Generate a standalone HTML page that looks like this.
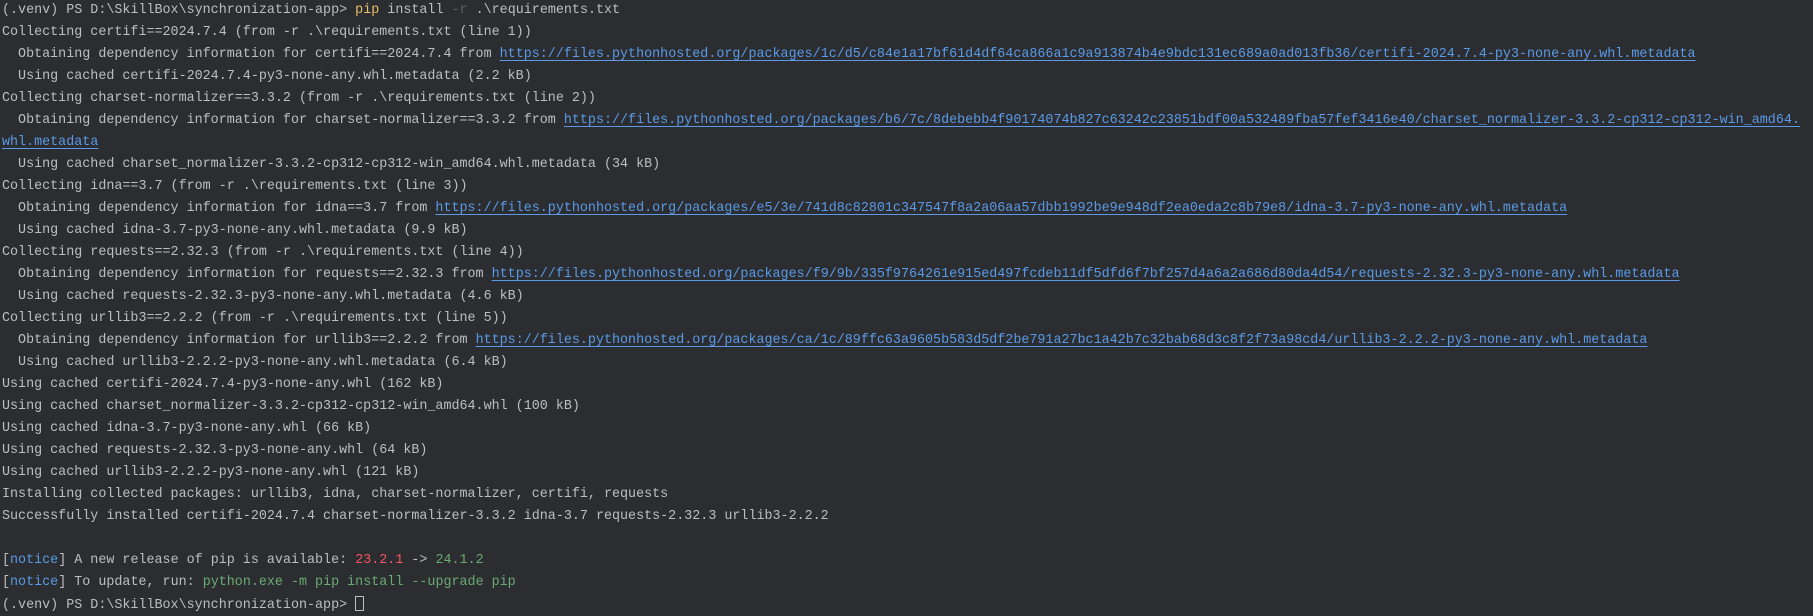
<!DOCTYPE html>
<html><head><meta charset="utf-8"><style>
html,body{margin:0;padding:0;width:1813px;height:600px;overflow:hidden;background:#2b2d30;}
#t{position:absolute;left:2px;top:0px;width:2400px;
font-family:"Liberation Mono",monospace;font-size:13.38px;line-height:22px;color:#bcbec4;white-space:pre;}
.l{color:#5a9ae6;text-decoration:underline;text-underline-offset:3px;}
.d{color:#5f6168}.y{color:#e8bf6a}.b{color:#5a9ae6}.r{color:#f75464}.g{color:#6aab73}
.c{display:inline-block;width:9px;height:15px;border:1px solid #bcbec4;box-sizing:border-box;vertical-align:-3px}
.last{position:relative;top:1px}
</style></head><body><div id="t">(.venv) PS D:\SkillBox\synchronization-app&gt; <span class="y">pip</span> install <span class="d">-r</span> .\requirements.txt
Collecting certifi==2024.7.4 (from -r .\requirements.txt (line 1))
  Obtaining dependency information for certifi==2024.7.4 from <span class="l">https://files.pythonhosted.org/packages/1c/d5/c84e1a17bf61d4df64ca866a1c9a913874b4e9bdc131ec689a0ad013fb36/certifi-2024.7.4-py3-none-any.whl.metadata</span>
  Using cached certifi-2024.7.4-py3-none-any.whl.metadata (2.2 kB)
Collecting charset-normalizer==3.3.2 (from -r .\requirements.txt (line 2))
  Obtaining dependency information for charset-normalizer==3.3.2 from <span class="l">https://files.pythonhosted.org/packages/b6/7c/8debebb4f90174074b827c63242c23851bdf00a532489fba57fef3416e40/charset_normalizer-3.3.2-cp312-cp312-win_amd64.</span>
<span class="l">whl.metadata</span>
  Using cached charset_normalizer-3.3.2-cp312-cp312-win_amd64.whl.metadata (34 kB)
Collecting idna==3.7 (from -r .\requirements.txt (line 3))
  Obtaining dependency information for idna==3.7 from <span class="l">https://files.pythonhosted.org/packages/e5/3e/741d8c82801c347547f8a2a06aa57dbb1992be9e948df2ea0eda2c8b79e8/idna-3.7-py3-none-any.whl.metadata</span>
  Using cached idna-3.7-py3-none-any.whl.metadata (9.9 kB)
Collecting requests==2.32.3 (from -r .\requirements.txt (line 4))
  Obtaining dependency information for requests==2.32.3 from <span class="l">https://files.pythonhosted.org/packages/f9/9b/335f9764261e915ed497fcdeb11df5dfd6f7bf257d4a6a2a686d80da4d54/requests-2.32.3-py3-none-any.whl.metadata</span>
  Using cached requests-2.32.3-py3-none-any.whl.metadata (4.6 kB)
Collecting urllib3==2.2.2 (from -r .\requirements.txt (line 5))
  Obtaining dependency information for urllib3==2.2.2 from <span class="l">https://files.pythonhosted.org/packages/ca/1c/89ffc63a9605b583d5df2be791a27bc1a42b7c32bab68d3c8f2f73a98cd4/urllib3-2.2.2-py3-none-any.whl.metadata</span>
  Using cached urllib3-2.2.2-py3-none-any.whl.metadata (6.4 kB)
Using cached certifi-2024.7.4-py3-none-any.whl (162 kB)
Using cached charset_normalizer-3.3.2-cp312-cp312-win_amd64.whl (100 kB)
Using cached idna-3.7-py3-none-any.whl (66 kB)
Using cached requests-2.32.3-py3-none-any.whl (64 kB)
Using cached urllib3-2.2.2-py3-none-any.whl (121 kB)
Installing collected packages: urllib3, idna, charset-normalizer, certifi, requests
Successfully installed certifi-2024.7.4 charset-normalizer-3.3.2 idna-3.7 requests-2.32.3 urllib3-2.2.2

[<span class="b">notice</span>] A new release of pip is available: <span class="r">23.2.1</span> -&gt; <span class="g">24.1.2</span>
[<span class="b">notice</span>] To update, run: <span class="g">python.exe -m pip install --upgrade pip</span>
<span class="last">(.venv) PS D:\SkillBox\synchronization-app&gt; <span class="c"></span></span></div></body></html>
